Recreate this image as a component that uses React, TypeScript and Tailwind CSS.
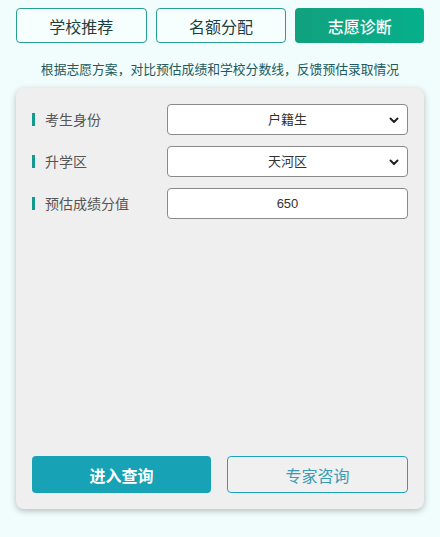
import React from "react";

const font = { fontFamily: '"Noto Sans CJK SC", "Noto Sans", sans-serif' };
const fieldFont = { fontFamily: '"Liberation Sans", "Noto Sans CJK SC", sans-serif' };

function Chevron() {
  return (
    <svg width="12" height="12" viewBox="0 0 12 12" className="pointer-events-none absolute right-[8px] top-1/2 -translate-y-1/2">
      <path d="M2.5 4.5 L6 8 L9.5 4.5" fill="none" stroke="#222" strokeWidth="2" strokeLinecap="round" strokeLinejoin="round" />
    </svg>
  );
}

function Label({ text }: { text: string }) {
  return (
    <div className="flex w-[135px] items-center">
      <span className="mr-[10px] inline-block h-[13px] w-[3px] bg-[#14998f]" />
      <span className="text-[14px] text-[#555]">{text}</span>
    </div>
  );
}

function SelectRow({ label, value, options }: { label: string; value: string; options: string[] }) {
  return (
    <div className="flex items-center">
      <Label text={label} />
      <div className="relative flex-1">
        <select
          defaultValue={value}
          className="h-[31px] w-full appearance-none rounded-[4px] border border-[#8a8a8a] bg-white text-center text-[13px] text-[#333] outline-none [text-align-last:center]"
          style={fieldFont}
        >
          {options.map((o) => (
            <option key={o}>{o}</option>
          ))}
        </select>
        <Chevron />
      </div>
    </div>
  );
}

export default function App() {
  return (
    <div className="min-h-[537px] w-[440px] bg-[#f1fcfd] px-[16px] pt-[8px]" style={font}>
      <div className="flex gap-[9px]">
        <button className="h-[35px] flex-1 rounded-[4px] border border-[#28a091] bg-[#f7fefe] text-[16px] text-[#1f3f3f]">学校推荐</button>
        <button className="h-[35px] flex-1 rounded-[4px] border border-[#28a091] bg-[#f7fefe] text-[16px] text-[#1f3f3f]">名额分配</button>
        <button className="h-[35px] flex-1 rounded-[4px] bg-gradient-to-r from-[#11a17f] to-[#05b08a] text-[16px] font-medium text-white">志愿诊断</button>
      </div>
      <p className="pt-[18px] text-center text-[12.8px] leading-[16px] text-[#215a5c]">根据志愿方案，对比预估成绩和学校分数线，反馈预估录取情况</p>
      <div className="mt-[11px] flex h-[421px] flex-col rounded-[8px] bg-[#efefef] p-[16px] shadow-[0_2px_6px_rgba(0,0,0,0.25)]">
        <div className="flex flex-col gap-[11px]">
          <SelectRow label="考生身份" value="户籍生" options={["户籍生", "非户籍生"]} />
          <SelectRow label="升学区" value="天河区" options={["天河区", "越秀区", "海珠区"]} />
          <div className="flex items-center">
            <Label text="预估成绩分值" />
            <input
              defaultValue="650"
              className="h-[31px] flex-1 rounded-[4px] border border-[#8a8a8a] bg-white text-center text-[13px] text-[#333] outline-none"
              style={fieldFont}
            />
          </div>
        </div>
        <div className="mt-auto flex gap-[16px]">
          <button className="h-[37px] flex-1 rounded-[4px] bg-[#17a2b6] text-[16px] font-bold text-white">进入查询</button>
          <button className="h-[37px] flex-1 rounded-[4px] border border-[#1fa3bd] bg-[#f0f0f0] text-[16px] text-[#3a9cb4]">专家咨询</button>
        </div>
      </div>
    </div>
  );
}
